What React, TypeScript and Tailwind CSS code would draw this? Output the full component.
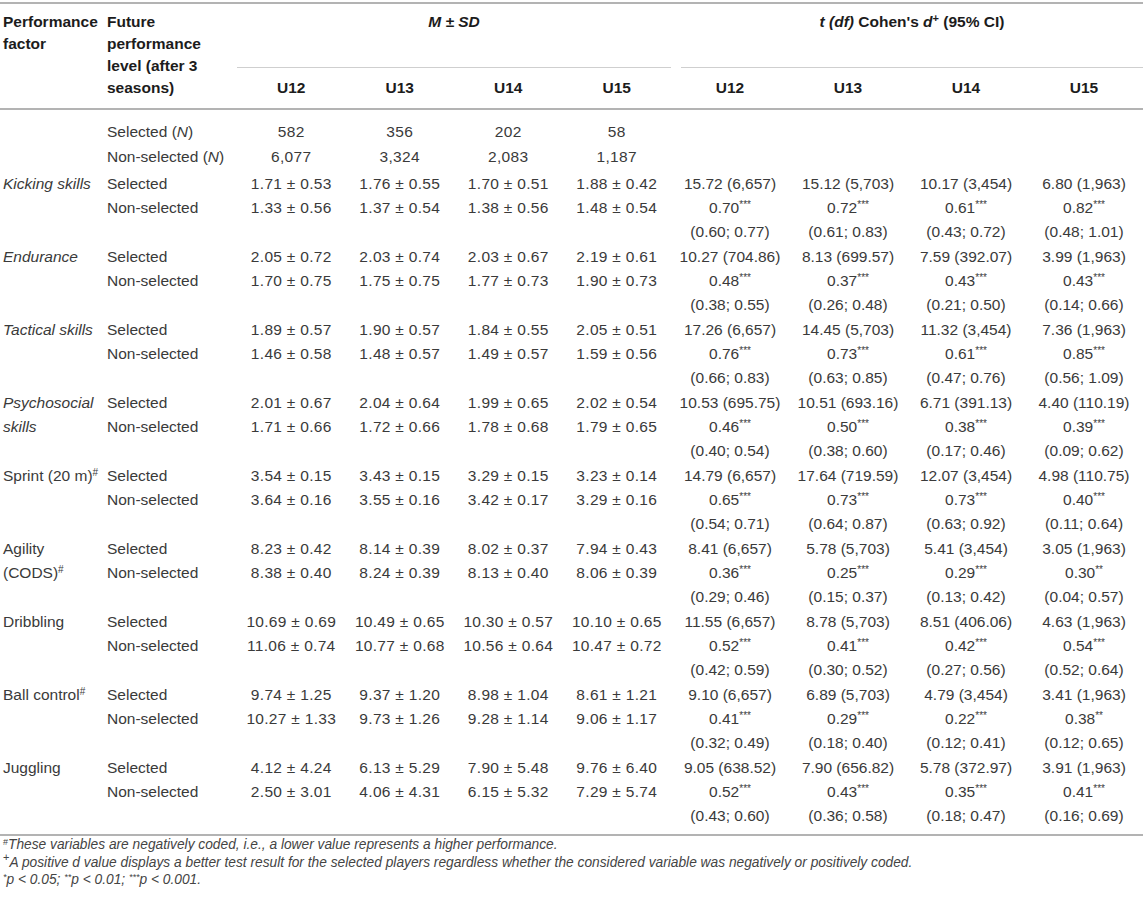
import React from "react";

type Group = {
  factor: React.ReactNode;
  selected: string[];
  nonSelected: string[];
  tests: [string, string, string, string][];
};

const cols = "grid grid-cols-[104px_133px_repeat(4,108.5px)_repeat(4,118px)]";

const Stars = ({ n }: { n: string }) => <sup className="text-[10px] leading-none">{n}</sup>;

const groups: Group[] = [
  {
    factor: <span className="italic">Kicking skills</span>,
    selected: ["1.71 ± 0.53", "1.76 ± 0.55", "1.70 ± 0.51", "1.88 ± 0.42"],
    nonSelected: ["1.33 ± 0.56", "1.37 ± 0.54", "1.38 ± 0.56", "1.48 ± 0.54"],
    tests: [
      ["15.72 (6,657)", "0.70", "***", "(0.60; 0.77)"],
      ["15.12 (5,703)", "0.72", "***", "(0.61; 0.83)"],
      ["10.17 (3,454)", "0.61", "***", "(0.43; 0.72)"],
      ["6.80 (1,963)", "0.82", "***", "(0.48; 1.01)"],
    ],
  },
  {
    factor: <span className="italic">Endurance</span>,
    selected: ["2.05 ± 0.72", "2.03 ± 0.74", "2.03 ± 0.67", "2.19 ± 0.61"],
    nonSelected: ["1.70 ± 0.75", "1.75 ± 0.75", "1.77 ± 0.73", "1.90 ± 0.73"],
    tests: [
      ["10.27 (704.86)", "0.48", "***", "(0.38; 0.55)"],
      ["8.13 (699.57)", "0.37", "***", "(0.26; 0.48)"],
      ["7.59 (392.07)", "0.43", "***", "(0.21; 0.50)"],
      ["3.99 (1,963)", "0.43", "***", "(0.14; 0.66)"],
    ],
  },
  {
    factor: <span className="italic">Tactical skills</span>,
    selected: ["1.89 ± 0.57", "1.90 ± 0.57", "1.84 ± 0.55", "2.05 ± 0.51"],
    nonSelected: ["1.46 ± 0.58", "1.48 ± 0.57", "1.49 ± 0.57", "1.59 ± 0.56"],
    tests: [
      ["17.26 (6,657)", "0.76", "***", "(0.66; 0.83)"],
      ["14.45 (5,703)", "0.73", "***", "(0.63; 0.85)"],
      ["11.32 (3,454)", "0.61", "***", "(0.47; 0.76)"],
      ["7.36 (1,963)", "0.85", "***", "(0.56; 1.09)"],
    ],
  },
  {
    factor: (
      <span className="italic">
        Psychosocial
        <br />
        skills
      </span>
    ),
    selected: ["2.01 ± 0.67", "2.04 ± 0.64", "1.99 ± 0.65", "2.02 ± 0.54"],
    nonSelected: ["1.71 ± 0.66", "1.72 ± 0.66", "1.78 ± 0.68", "1.79 ± 0.65"],
    tests: [
      ["10.53 (695.75)", "0.46", "***", "(0.40; 0.54)"],
      ["10.51 (693.16)", "0.50", "***", "(0.38; 0.60)"],
      ["6.71 (391.13)", "0.38", "***", "(0.17; 0.46)"],
      ["4.40 (110.19)", "0.39", "***", "(0.09; 0.62)"],
    ],
  },
  {
    factor: (
      <span>
        Sprint (20 m)<Stars n="#" />
      </span>
    ),
    selected: ["3.54 ± 0.15", "3.43 ± 0.15", "3.29 ± 0.15", "3.23 ± 0.14"],
    nonSelected: ["3.64 ± 0.16", "3.55 ± 0.16", "3.42 ± 0.17", "3.29 ± 0.16"],
    tests: [
      ["14.79 (6,657)", "0.65", "***", "(0.54; 0.71)"],
      ["17.64 (719.59)", "0.73", "***", "(0.64; 0.87)"],
      ["12.07 (3,454)", "0.73", "***", "(0.63; 0.92)"],
      ["4.98 (110.75)", "0.40", "***", "(0.11; 0.64)"],
    ],
  },
  {
    factor: (
      <span>
        Agility
        <br />
        (CODS)<Stars n="#" />
      </span>
    ),
    selected: ["8.23 ± 0.42", "8.14 ± 0.39", "8.02 ± 0.37", "7.94 ± 0.43"],
    nonSelected: ["8.38 ± 0.40", "8.24 ± 0.39", "8.13 ± 0.40", "8.06 ± 0.39"],
    tests: [
      ["8.41 (6,657)", "0.36", "***", "(0.29; 0.46)"],
      ["5.78 (5,703)", "0.25", "***", "(0.15; 0.37)"],
      ["5.41 (3,454)", "0.29", "***", "(0.13; 0.42)"],
      ["3.05 (1,963)", "0.30", "**", "(0.04; 0.57)"],
    ],
  },
  {
    factor: <span>Dribbling</span>,
    selected: ["10.69 ± 0.69", "10.49 ± 0.65", "10.30 ± 0.57", "10.10 ± 0.65"],
    nonSelected: ["11.06 ± 0.74", "10.77 ± 0.68", "10.56 ± 0.64", "10.47 ± 0.72"],
    tests: [
      ["11.55 (6,657)", "0.52", "***", "(0.42; 0.59)"],
      ["8.78 (5,703)", "0.41", "***", "(0.30; 0.52)"],
      ["8.51 (406.06)", "0.42", "***", "(0.27; 0.56)"],
      ["4.63 (1,963)", "0.54", "***", "(0.52; 0.64)"],
    ],
  },
  {
    factor: (
      <span>
        Ball control<Stars n="#" />
      </span>
    ),
    selected: ["9.74 ± 1.25", "9.37 ± 1.20", "8.98 ± 1.04", "8.61 ± 1.21"],
    nonSelected: ["10.27 ± 1.33", "9.73 ± 1.26", "9.28 ± 1.14", "9.06 ± 1.17"],
    tests: [
      ["9.10 (6,657)", "0.41", "***", "(0.32; 0.49)"],
      ["6.89 (5,703)", "0.29", "***", "(0.18; 0.40)"],
      ["4.79 (3,454)", "0.22", "***", "(0.12; 0.41)"],
      ["3.41 (1,963)", "0.38", "**", "(0.12; 0.65)"],
    ],
  },
  {
    factor: <span>Juggling</span>,
    selected: ["4.12 ± 4.24", "6.13 ± 5.29", "7.90 ± 5.48", "9.76 ± 6.40"],
    nonSelected: ["2.50 ± 3.01", "4.06 ± 4.31", "6.15 ± 5.32", "7.29 ± 5.74"],
    tests: [
      ["9.05 (638.52)", "0.52", "***", "(0.43; 0.60)"],
      ["7.90 (656.82)", "0.43", "***", "(0.36; 0.58)"],
      ["5.78 (372.97)", "0.35", "***", "(0.18; 0.47)"],
      ["3.91 (1,963)", "0.41", "***", "(0.16; 0.69)"],
    ],
  },
];

const ageGroups = ["U12", "U13", "U14", "U15"];

export default function App() {
  return (
    <div className="w-[1143px] h-[906px] bg-white text-[15.5px] text-[#3a3a3a] font-['Liberation_Sans',Arial,sans-serif] overflow-hidden">
      {/* Header */}
      <div className={`${cols} mt-[2px] border-t-2 border-b-2 border-[#b3b3b3] font-bold text-[#1c1c1c]`}>
        <div className="row-span-2 pl-[3px] pt-[7px] leading-[22px]">
          Performance
          <br />
          factor
        </div>
        <div className="row-span-2 pl-[3px] pt-[7px] leading-[22px]">
          Future
          <br />
          performance
          <br />
          level (after 3
          <br />
          seasons)
        </div>
        <div className="col-span-4 h-[64px] border-b border-[#cfcfcf] pt-[7px] leading-[22px] text-center italic">
          M ± SD
        </div>
        <div className="col-span-4 pl-[10px]">
          <div className="h-[64px] border-b border-[#cfcfcf] pt-[7px] leading-[22px] text-center">
            <span className="italic">t (df)</span> Cohen's <span className="italic">d</span>
            <sup className="text-[11px]">+</sup> (95% CI)
          </div>
        </div>
        {[...ageGroups, ...ageGroups].map((u, i) => (
          <div key={i} className="h-[40px] flex items-center justify-center">
            {u}
          </div>
        ))}
      </div>

      {/* Body */}
      <div className="pt-[9px] pb-[5px] border-b-2 border-[#b3b3b3]">
        <div className={`${cols} leading-[25px] pb-[3px]`}>
          <div />
          <div className="pl-[3px]">
            Selected (<span className="italic">N</span>)
            <br />
            Non-selected (<span className="italic">N</span>)
          </div>
          {[
            ["582", "6,077"],
            ["356", "3,324"],
            ["202", "2,083"],
            ["58", "1,187"],
          ].map(([a, b], i) => (
            <div key={i} className="text-center tracking-[0.3px]">
              {a}
              <br />
              {b}
            </div>
          ))}
        </div>

        {groups.map((g, gi) => (
          <div key={gi} className={`${cols} h-[73px] leading-[24px]`}>
            <div className="pl-[3px] whitespace-nowrap">{g.factor}</div>
            <div className="pl-[3px]">
              Selected
              <br />
              Non-selected
            </div>
            {g.selected.map((s, i) => (
              <div key={i} className="text-center whitespace-nowrap tracking-[0.3px]">
                {s}
                <br />
                {g.nonSelected[i]}
              </div>
            ))}
            {g.tests.map(([t, d, st, ci], i) => (
              <div key={`t${i}`} className="text-center whitespace-nowrap">
                {t}
                <br />
                {d}
                <Stars n={st} />
                <br />
                {ci}
              </div>
            ))}
          </div>
        ))}
      </div>

      {/* Footnotes */}
      <div className="pl-[3px] text-[13.75px] leading-[17.5px] italic text-[#444]">
        <p>
          <sup className="text-[9px] not-italic">#</sup>These variables are negatively coded, i.e., a lower value represents a higher performance.
        </p>
        <p>
          <sup className="text-[11px] not-italic">+</sup>A positive d value displays a better test result for the selected players regardless whether the considered variable was negatively or positively coded.
        </p>
        <p>
          <sup className="text-[9px]">*</sup>p &lt; 0.05; <sup className="text-[9px]">**</sup>p &lt; 0.01; <sup className="text-[9px]">***</sup>p &lt; 0.001.
        </p>
      </div>
    </div>
  );
}
